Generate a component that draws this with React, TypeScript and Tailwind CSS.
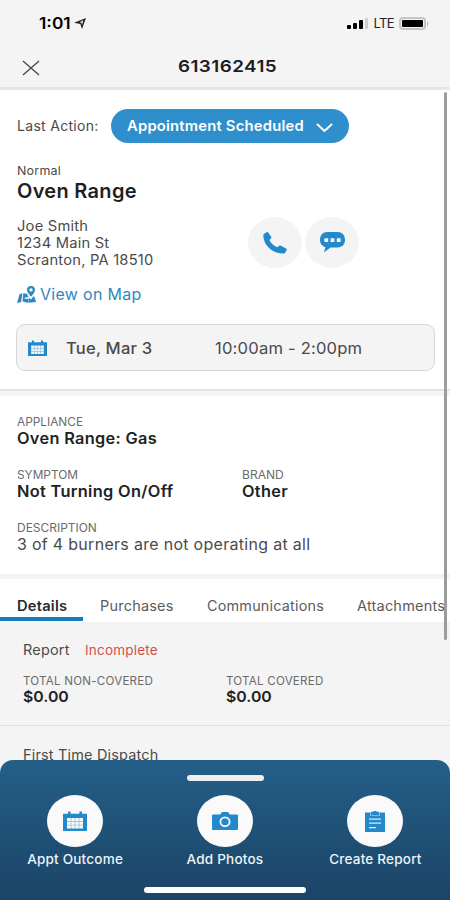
import React from "react";

type IconProps = { className?: string };

function LocationIcon({ className }: IconProps) {
  return (
    <svg viewBox="0 0 12 11" className={className}>
      <path fill="#222" fillRule="evenodd" d="M12 0 8 11 6.300 5.900 0 4.700zM9.300 2.300 5.500 4.200l2 .6.500 2.200z" />
    </svg>
  );
}

function CalendarIcon({ className }: IconProps) {
  return (
    <svg viewBox="0 0 24 20" preserveAspectRatio="none" className={className}>
      <path
        fill="currentColor"
        fillRule="evenodd"
        d="M5 0.5h2.6v2.3h8.8V0.5H19v2.3h5V20H0V2.8h5zM4 7v10.6h16V7z"
      />
      <path
        fill="currentColor"
        opacity="0.45"
        d="M4 10h16v.9H4zM4 13.7h16v.9H4zM7.6 7h.9v10.6h-.9zM11.6 7h.9v10.6h-.9zM15.6 7h.9v10.6h-.9z"
      />
    </svg>
  );
}

function CameraIcon({ className }: IconProps) {
  return (
    <svg viewBox="0 0 26 18" className={className}>
      <path
        fill="currentColor"
        d="M1 2.5h7.2L10 0h6l1.8 2.5H25a1 1 0 0 1 1 1V17a1 1 0 0 1-1 1H1a1 1 0 0 1-1-1V3.500a1 1 0 0 1 1-1z"
      />
      <ellipse cx="13" cy="9.700" rx="4.600" ry="4.400" fill="none" stroke="#fafafa" strokeWidth="1.800" />
    </svg>
  );
}

function ClipboardIcon({ className }: IconProps) {
  return (
    <svg viewBox="0 0 20 21" className={className}>
      <path fill="currentColor" d="M0 1.500h20V21H0z" />
      <path fill="#8cc2e6" d="M5 1.500h10v3.300H5z" />
      <path fill="currentColor" d="M6 .8h2.500V0h3v.8H14v3.200H6z" />
      <path fill="#d3e9f7" d="M4 7.500h12v1.300H4zM4 11.500h12v1.300H4zM4 16h7v1.300H4z" />
    </svg>
  );
}

function PhoneIcon({ className }: IconProps) {
  return (
    <svg viewBox="0 0 24 22" className={className}>
      <path
        fill="currentColor"
        d="M1.200 1.800 3.500.3c.6-.4 1.300-.3 1.700.3l3 4.100c.4.600.3 1.200-.2 1.700L6.400 7.900c1.500 3.300 4.300 5.900 7.900 7.400l1.900-1.500c.6-.5 1.200-.5 1.800-.1l5 2.900c.7.400.9 1 .6 1.600l-1.500 2.500c-.3.600-.9.900-1.700.9C9.400 21.400.4 13.200.3 3.400c0-.7.3-1.200.9-1.600z"
      />
    </svg>
  );
}

function ChatIcon({ className }: IconProps) {
  return (
    <svg viewBox="0 0 27 22" className={className}>
      <path
        fill="currentColor"
        d="M8 0h11c4.600 0 7.600 3.400 7.600 8.200S23.600 16.200 19 16.200h-7.500L4.500 21.500l1.600-5.600C2.500 15 .4 12 .4 8.200.4 3.400 3.400 0 8 0z"
      />
      <path fill="#f4f9fc" d="M5 6.500h4v4H5zM11.500 6.500h4v4h-4zM18 6.500h4v4h-4z" />
    </svg>
  );
}

function MapPinIcon({ className }: IconProps) {
  return (
    <svg viewBox="0 0 19 17" className={className}>
      <path
        fill="currentColor"
        fillRule="evenodd"
        d="M14 0a4 4 0 0 1 4 4c0 2.300-2.400 4.600-4 6.800C12.400 8.600 10 6.300 10 4a4 4 0 0 1 4-4zm0 2.200a1.700 1.700 0 1 0 0 3.400 1.700 1.700 0 0 0 0-3.400z"
      />
      <path
        fill="currentColor"
        d="M2.500 8.300 5.400 7.300 4.200 16 0 17zM6.200 7.300l3.800.5 1.500 3.500-3.500.2-.4 1.300 3.800.1.300 4-6.100-1.300zM11.500 11.500l2.500 2 2.500-3 1 .2L19 16l-6.800.8z"
      />
    </svg>
  );
}

function StatusBar() {
  return (
    <div className="flex h-[46px] items-center justify-between pl-[39px] pr-[22px] pt-px text-black">
      <div className="flex items-center gap-[7px]">
        <span className="inline-block origin-left scale-x-[1.12] text-[15.500px] font-semibold">1:01</span>
        <LocationIcon className="h-[11px] w-[12px]" />
      </div>
      <div className="flex items-center">
        <div className="flex h-[11px] items-end gap-[2px]">
          <span className="h-[4px] w-[4px] rounded-[1px] bg-black" />
          <span className="h-[6px] w-[4px] rounded-[1px] bg-black" />
          <span className="h-[9px] w-[4px] rounded-[1px] bg-black" />
          <span className="h-[11px] w-[3px] rounded-[1px] bg-[#cfcfcf]" />
        </div>
        <span className="ml-[5px] text-[13px] font-normal tracking-[-0.600px] text-[#222]">LTE</span>
        <div className="ml-[5px] flex h-[13px] w-[27px] rounded-[4px] border-2 border-[#c4c4c4] p-px">
          <div className="flex-1 rounded-[1px] bg-black" />
        </div>
        <span className="ml-px h-[4px] w-[1px] bg-[#b5b5b5]" />
      </div>
    </div>
  );
}

type FieldProps = {
  label: string;
  value: string;
  labelClass: string;
  valueClass: string;
};

function Field({ label, value, labelClass, valueClass }: FieldProps) {
  return (
    <div className="flex flex-col items-start">
      <span className={`origin-left text-[11.500px] leading-[16px] text-[#6b6b6b] ${labelClass}`}>{label}</span>
      <span className={`origin-left ${valueClass}`}>{value}</span>
    </div>
  );
}

type ActionProps = {
  label: string;
  children: React.ReactNode;
};

function BottomAction({ label, children }: ActionProps) {
  return (
    <button className="flex w-[150px] flex-col items-center">
      <span className="flex h-[52px] w-[56px] items-center justify-center rounded-[50%] bg-[#fafafa] text-[#2389cb]">
        {children}
      </span>
      <span className="mt-[3px] scale-x-[1.04] text-[13px] font-medium leading-[18px] tracking-[0.200px] text-[#eef4f8]">
        {label}
      </span>
    </button>
  );
}

export default function App() {
  return (
    <div className="relative flex h-[900px] w-[450px] flex-col overflow-hidden whitespace-nowrap bg-[#f4f4f4] font-['Inter',sans-serif] text-[#4a4a4a]">
      <StatusBar />
      <header className="grid h-[44px] grid-cols-[1fr_auto_1fr] items-center border-b-[3px] border-[#e6e6e6] px-[22px]">
        <svg viewBox="0 0 18 16" className="mt-[2px] h-[16px] w-[18px]">
          <path d="M1 1l16 14M17 1L1 15" stroke="#444" strokeWidth="1.200" fill="none" />
        </svg>
        <h1 className="mb-[2px] translate-x-[3px] scale-x-[1.14] text-[16.500px] font-semibold leading-[24px] tracking-[0.400px] text-[#1c1c1c]">
          613162415
        </h1>
      </header>

      <section className="h-[301px] border-b-2 border-[#e4e4e4] bg-white pl-[17px] pr-[16px] pt-[19px]">
        <div className="flex h-[34px] items-center">
          <span className="w-[94px] pb-px text-[14px] tracking-[0.300px]">Last Action:</span>
          <button className="flex h-[34px] w-[238px] items-center justify-between rounded-full bg-[#2f8fcc] pl-[16px] pr-[16px] text-white">
            <span className="origin-left scale-x-[1.020] text-[14.500px] font-semibold tracking-[0.200px]">
              Appointment Scheduled
            </span>
            <svg viewBox="0 0 17 9" className="mt-[2px] h-[9px] w-[17px]">
              <path d="M1 1l7.500 7L16 1" stroke="white" strokeWidth="2" fill="none" />
            </svg>
          </button>
        </div>
        <p className="mt-[20px] origin-left scale-x-[1.04] text-[12px] leading-[16px] tracking-[0.200px]">Normal</p>
        <h2 className="text-[20px] font-semibold leading-[24px] tracking-[0.300px] text-[#1f1f1f]">Oven Range</h2>
        <div className="mt-[14px] flex">
          <div className="w-[231px] text-[14px] leading-[17px] tracking-[0.200px]">
            <div className="origin-left scale-x-[1.05]">
              <p>Joe Smith</p>
              <p>1234 Main St</p>
              <p>Scranton, PA 18510</p>
            </div>
          </div>
          <div className="flex h-[51px] gap-[3px] text-[#2389cb]">
            <button className="flex h-[51px] w-[54px] items-center justify-center rounded-[50%] bg-[#f4f4f4]">
              <PhoneIcon className="h-[22px] w-[24px]" />
            </button>
            <button className="flex h-[51px] w-[54px] items-center justify-center rounded-[50%] bg-[#f4f4f4]">
              <ChatIcon className="h-[21px] w-[27px]" />
            </button>
          </div>
        </div>
        <a className="mt-[17px] flex h-[20px] items-center text-[#2f87c4]">
          <MapPinIcon className="mb-[2px] h-[17px] w-[19px]" />
          <span className="ml-[4px] origin-left scale-x-[1.03] text-[15.500px] tracking-[0.300px]">View on Map</span>
        </a>
        <div className="-ml-px mt-[19px] flex h-[47px] w-[419px] items-center rounded-[9px] border-[1.500px] border-[#d6d6d6] bg-[#f4f4f4] pl-[11px]">
          <CalendarIcon className="h-[16px] w-[19px] text-[#2389cb]" />
          <span className="ml-[19px] w-[149px] origin-left scale-x-[1.035] text-[16px] font-medium tracking-[0.200px]">
            Tue, Mar 3
          </span>
          <span className="origin-left scale-x-[1.035] text-[16px] tracking-[0.200px]">10:00am - 2:00pm</span>
        </div>
      </section>

      <section className="mt-[5px] h-[178px] bg-white pl-[17px] pt-[18px]">
        <Field
          label="APPLIANCE"
          value="Oven Range: Gas"
          labelClass="scale-x-[1.03]"
          valueClass="text-[15.500px] leading-[18px] font-semibold tracking-[0.300px] text-[#222] scale-x-[1.053]"
        />
        <div className="mt-[19px] flex">
          <div className="w-[225px]">
            <Field
              label="SYMPTOM"
              value="Not Turning On/Off"
              labelClass="scale-x-[1.03]"
              valueClass="text-[15.500px] leading-[18px] font-semibold tracking-[0.300px] text-[#222] scale-x-[1.056]"
            />
          </div>
          <Field
            label="BRAND"
            value="Other"
            labelClass="scale-x-[1.05]"
            valueClass="text-[15.500px] leading-[18px] font-semibold tracking-[0.300px] text-[#222] scale-x-[1.053]"
          />
        </div>
        <div className="mt-[19px]">
          <Field
            label="DESCRIPTION"
            value="3 of 4 burners are not operating at all"
            labelClass="scale-x-[1.04]"
            valueClass="text-[15.500px] leading-[18px] tracking-[0.300px] scale-x-[1.03]"
          />
        </div>
      </section>

      <nav className="mt-[5px] flex h-[43px] items-stretch bg-white text-[14px] tracking-[0.200px] text-[#5a5a5a]">
        <div className="mb-px flex w-[83px] items-center border-b-4 border-[#117dbd] pl-[17px] pt-[14px] font-semibold text-[#2a2a2a]">
          <span className="origin-left scale-x-[1.05]">Details</span>
        </div>
        <div className="flex w-[107px] items-center pl-[17px] pt-[10px]">
          <span className="origin-left scale-x-[1.035]">Purchases</span>
        </div>
        <div className="flex w-[150px] items-center pl-[17px] pt-[10px]">
          <span className="origin-left scale-x-[1.027]">Communications</span>
        </div>
        <div className="flex items-center pl-[17px] pt-[10px]">
          <span className="origin-left scale-x-[1.035]">Attachments</span>
        </div>
      </nav>

      <section className="h-[104px] border-b border-[#dfdfdf] pl-[23px] pt-[19px]">
        <div className="flex text-[14px] leading-[18px]">
          <span className="w-[62px] origin-left scale-x-[1.03] tracking-[0.200px]">Report</span>
          <span className="text-[13.500px] tracking-[0.200px] text-[#d2514b]">Incomplete</span>
        </div>
        <div className="mt-[14px] flex">
          <div className="w-[203px]">
            <Field
              label="TOTAL NON-COVERED"
              value="$0.00"
              labelClass="tracking-[0.200px] scale-x-[1.01]"
              valueClass="text-[15px] font-semibold leading-[16px] text-[#222] scale-x-[1.055]"
            />
          </div>
          <Field
            label="TOTAL COVERED"
            value="$0.00"
            labelClass="tracking-[0.200px] scale-x-[1.01]"
            valueClass="text-[15px] font-semibold leading-[16px] text-[#222] scale-x-[1.055]"
          />
        </div>
      </section>
      <p className="origin-[23px_50%] scale-x-[1.03] pl-[23px] pt-[20px] text-[14px] leading-[18px] tracking-[0.200px]">
        First Time Dispatch
      </p>

      <div className="absolute right-[3px] top-[92px] h-[548px] w-[3px] rounded-full bg-[#9c9c9c]" />

      <footer className="absolute inset-x-0 bottom-0 flex h-[140px] flex-col items-center rounded-t-[13px] bg-gradient-to-b from-[#245f88] to-[#1b4467] pt-[15px]">
        <div className="h-[6px] w-[77px] rounded-full bg-[#eeeeee]" />
        <div className="mt-[14px] flex">
          <BottomAction label="Appt Outcome">
            <CalendarIcon className="h-[20px] w-[24px]" />
          </BottomAction>
          <BottomAction label="Add Photos">
            <CameraIcon className="h-[18px] w-[26px]" />
          </BottomAction>
          <BottomAction label="Create Report">
            <ClipboardIcon className="h-[21px] w-[20px]" />
          </BottomAction>
        </div>
        <div className="mt-[19px] h-[6px] w-[162px] rounded-full bg-white" />
      </footer>
    </div>
  );
}
